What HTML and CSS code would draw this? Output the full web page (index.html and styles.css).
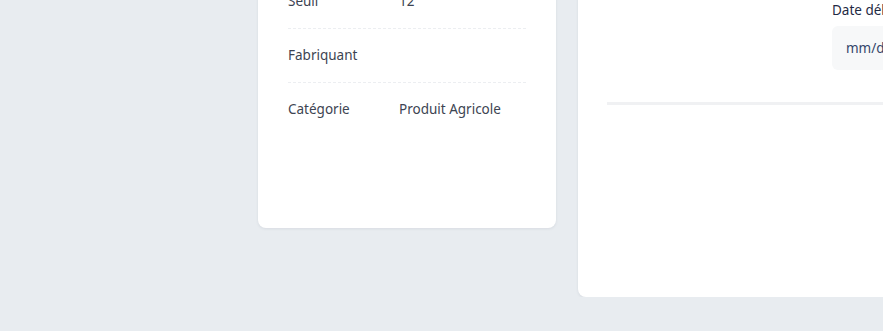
FILE: index.html
```html
<!DOCTYPE html>
<html lang="fr">
<head>
    <meta charset="UTF-8">
    <meta name="viewport" content="width=device-width, initial-scale=1.0">
    <title>Produit</title>
    <link rel="stylesheet" href="styles.css">
</head>
<body>
  <div class="page">
    <div class="card info">
      <div class="row"><span class="label">Nom</span><span class="value">Engrais NPK</span></div>
      <div class="row"><span class="label">Quantité</span><span class="value">40</span></div>
      <div class="row"><span class="label">Seuil</span><span class="value">12</span></div>
      <div class="row"><span class="label">Fabriquant</span><span class="value"></span></div>
      <div class="row"><span class="label">Catégorie</span><span class="value">Produit Agricole</span></div>
    </div>

    <div class="card form">
      <h2 class="title">Mouvement de stock</h2>
      <div class="fields">
        <div class="field">
          <label>Type</label>
          <div class="input">Entrée</div>
        </div>
        <div class="field">
          <label>Quantité</label>
          <div class="input">0</div>
        </div>
        <div class="field">
          <label>Motif</label>
          <div class="input"></div>
        </div>
        <div class="field"></div>
        <div class="field">
          <label>Date début</label>
          <div class="input">mm/dd/yyyy</div>
        </div>
      </div>
      <hr class="sep">
    </div>
  </div>
</body>
</html>
```

FILE: styles.css
```css
body {
    margin: 0;
    background: #e8ecf0;
    font-family: "Noto Sans", "Open Sans", sans-serif;
    font-size: 13.5px;
    color: #3d4452;
}

.page {
    display: flex;
    align-items: flex-start;
    gap: 22px;
    padding-left: 258px;
    margin-top: -163px;
}

.card {
    background: #fff;
    border-radius: 8px;
    box-shadow: 0 1px 3px rgba(30, 40, 60, 0.08);
}

.info {
    width: 238px;
    padding: 30px 30px 92px;
    flex: none;
}

.row {
    display: flex;
    line-height: 20px;
    padding: 16px 0 17px;
    border-bottom: 1px dashed #eceef1;
}
.row:last-child {
    border-bottom: none;
}
.label {
    width: 111px;
    flex: none;
}

.form {
    width: 560px;
    flex: none;
    padding: 29px 29px 192px;
}

.title {
    margin: 0 0 22px;
    font-size: 16px;
    line-height: 22px;
    font-weight: 600;
    color: #1f2a44;
}

.fields {
    display: grid;
    grid-template-columns: 205px 205px 205px;
    column-gap: 20px;
    row-gap: 20px;
}

.field label {
    display: block;
    line-height: 20px;
    margin-bottom: 6px;
    color: #1f2a44;
}

.input {
    height: 44px;
    box-sizing: border-box;
    padding: 0 14px;
    line-height: 44px;
    background: #f7f8f9;
    border-radius: 6px;
    color: #34466b;
}

.sep {
    margin: 32px 0 0;
    border: none;
    height: 3px;
    background: #f0f1f3;
}
```
